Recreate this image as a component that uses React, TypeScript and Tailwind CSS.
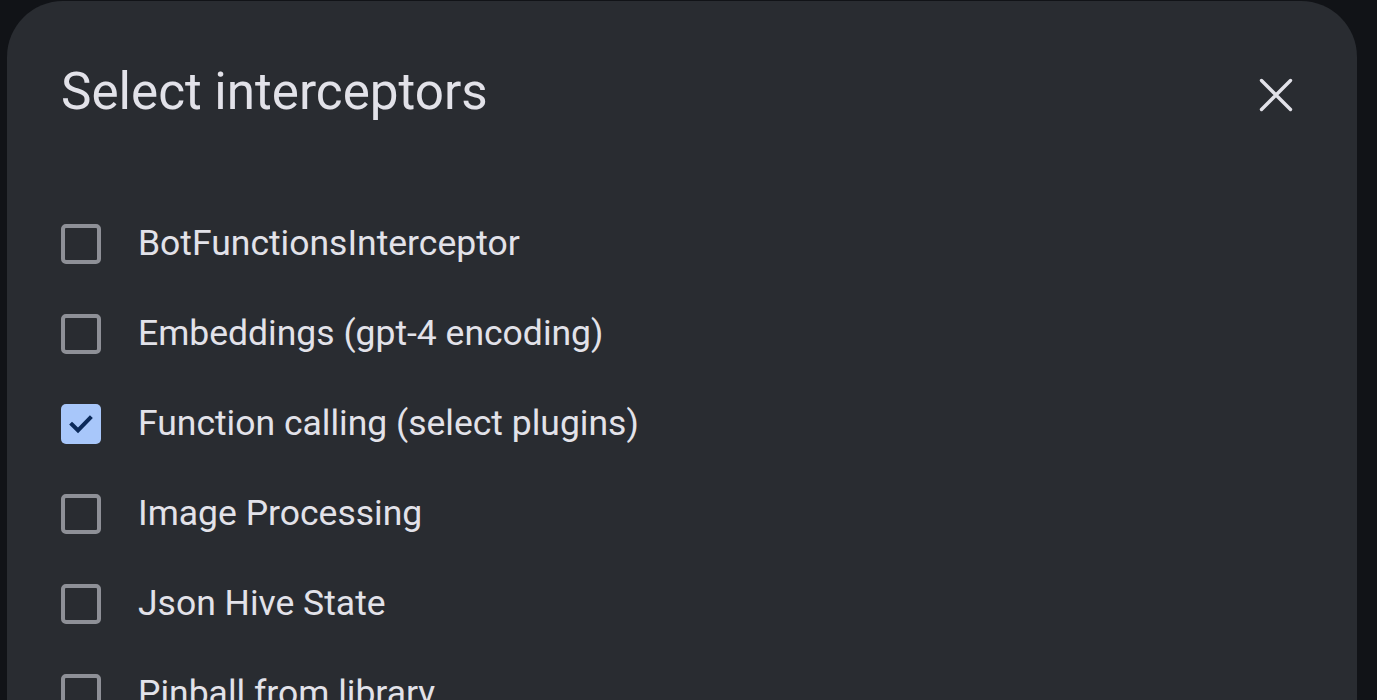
import React from "react";

const items = [
  { label: "BotFunctionsInterceptor", checked: false },
  { label: "Embeddings (gpt-4 encoding)", checked: false },
  { label: "Function calling (select plugins)", checked: true },
  { label: "Image Processing", checked: false },
  { label: "Json Hive State", checked: false },
  { label: "Pinball from library", checked: false },
];

export default function App() {
  return (
    <div
      className="w-[1377px] h-[700px] overflow-hidden bg-[#111317] pt-[1px] pl-[7px]"
      style={{ fontFamily: "Roboto, 'Noto Sans', sans-serif" }}
    >
      <div className="w-[1350px] h-[760px] bg-[#292c31] rounded-[56px] pl-[54px] pr-[64px]">
        <div className="flex items-center justify-between h-[182px]">
          <h1 className="text-[51.2px] leading-none text-[#e2e2e9] font-normal">
            Select interceptors
          </h1>
          <svg width="34" height="34" viewBox="0 0 34 34" className="mt-[6px]">
            <path
              d="M2.5 2.5 L31.5 31.5 M31.5 2.5 L2.5 31.5"
              stroke="#e2e2e9"
              strokeWidth="3.4"
              strokeLinecap="round"
            />
          </svg>
        </div>
        <div className="flex flex-col mt-[16px]">
          {items.map((it) => (
            <div key={it.label} className="flex items-center h-[90px]">
              {it.checked ? (
                <div className="w-[40px] h-[40px] rounded-[5px] bg-[#a8c7fa] flex items-center justify-center">
                  <svg width="26" height="26" viewBox="0 0 26 26">
                    <path
                      d="M4 13.5 L10 19.5 L22 7"
                      stroke="#0b2a5a"
                      strokeWidth="4"
                      fill="none"
                      strokeLinecap="square"
                    />
                  </svg>
                </div>
              ) : (
                <div className="w-[40px] h-[40px] rounded-[5px] border-[4px] border-[#8e9097]" />
              )}
              <span className="ml-[37px] text-[35.5px] text-[#e2e2e9] leading-none">
                {it.label}
              </span>
            </div>
          ))}
        </div>
      </div>
    </div>
  );
}
